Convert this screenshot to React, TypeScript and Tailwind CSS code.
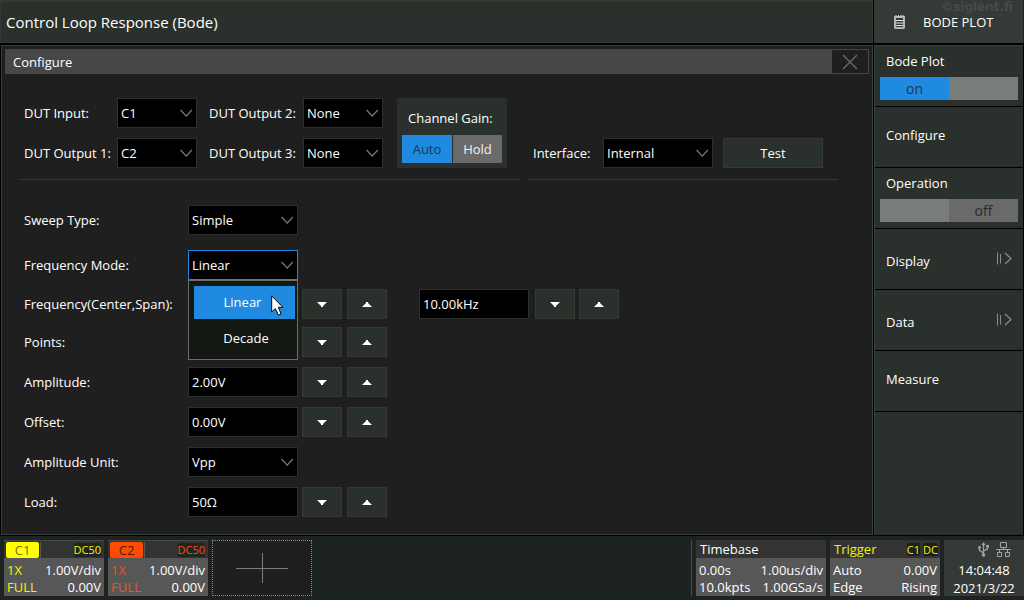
import type { ReactNode } from "react";

const fieldBase =
  "h-[30px] w-full appearance-none rounded-none border bg-black pl-[3px] text-[13px] text-white outline-none";
const field = `${fieldBase} border-[#2b312c]`;
const activeField = `${fieldBase} border-[#1f8ae0]`;

function Chevron() {
  return (
    <svg viewBox="0 0 13 9" className="pointer-events-none absolute top-[11px] right-1 h-[9px] w-[13px]" fill="none" stroke="#7d7d7d" strokeWidth="1.2">
      <path d="M0.6 1 L6.2 7.2 L11.8 1" />
    </svg>
  );
}

function Select({ id, value, options, active = false }: { id: string; value: string; options: string[]; active?: boolean }) {
  return (
    <div className="relative">
      <select id={id} defaultValue={value} className={active ? activeField : field}>
        {options.map((o) => (
          <option key={o}>{o}</option>
        ))}
      </select>
      <Chevron />
    </div>
  );
}

function Step({ dir, label }: { dir: "up" | "down"; label: string }) {
  return (
    <button type="button" aria-label={label} className="flex h-[30px] w-10 items-center justify-center border border-[#353a35] bg-[#2a302b]">
      <svg viewBox="0 0 10 6" className="h-[6px] w-[10px]" fill="#fff">
        <path d={dir === "down" ? "M0 1 H10 L6 5 V6 H4 V5 Z" : "M0 6 H10 L6 2 V1 H4 V2 Z"} />
      </svg>
    </button>
  );
}

function Steps({ name }: { name: string }) {
  return (
    <>
      <Step dir="down" label={`Decrease ${name}`} />
      <Step dir="up" label={`Increase ${name}`} />
    </>
  );
}

function Row({ id, label, children }: { id: string; label: string; children: ReactNode }) {
  return (
    <div className="flex h-[30px] items-center">
      <label htmlFor={id} className="w-[164px] shrink-0">
        {label}
      </label>
      {children}
    </div>
  );
}

function NumberRow({ id, label, value }: { id: string; label: string; value: string }) {
  return (
    <Row id={id} label={label}>
      <div className="mr-1 w-[110px]">
        <input id={id} defaultValue={value} className={field} />
      </div>
      <div className="flex gap-[5px]">
        <Steps name={label} />
      </div>
    </Row>
  );
}

function FrequencyMenu() {
  return (
    <ul role="listbox" aria-label="Frequency Mode" className="absolute top-[30px] left-0 z-10 h-20 w-full border border-[#6a6e6a] bg-[#131813] px-[5px] pt-[5px] pr-[2px] text-center">
      <li role="option" aria-selected="true" className="h-[33px] bg-[#1f8ae0] pr-1 leading-[33px]">
        Linear
      </li>
      <li role="option" aria-selected="false" className="h-[39px] pl-[3px] leading-[39px]">
        Decade
      </li>
    </ul>
  );
}

function Cursor() {
  return (
    <svg viewBox="0 0 13 21" className="pointer-events-none absolute top-[45px] left-[83px] z-20 h-[21px] w-[13px]" fill="#fff" stroke="#000" strokeWidth="1">
      <path d="M0.7 1 V17 L4.3 13.6 L7.4 20.2 L10.2 19 L7.3 12.3 H12 Z" />
    </svg>
  );
}

function Configure() {
  return (
    <main className="border border-[#3a3e3a] bg-[#1f1f1f] p-[3px] pb-[17px]">
      <div className="flex h-[25px] bg-[#474747]">
        <h2 className="flex-1 pl-2 leading-[26px]">Configure</h2>
        <button type="button" aria-label="Close" className="flex w-[37px] items-center justify-center border border-l-0 border-[#474747] bg-[#1f1f1f]">
          <svg viewBox="0 0 16 16" className="h-4 w-4" fill="none" stroke="#616161" strokeWidth="1.7">
            <path d="M1 1 L15 15 M15 1 L1 15" />
          </svg>
        </button>
      </div>

      <div className="mt-6 ml-[14px] flex gap-[9px]">
        <section className="flex w-[500px] gap-[14px] border-b border-[#383838] pb-[11px] pl-[5px]">
          <div className="grid grid-cols-[93px_80px_12px_94px_80px] grid-rows-[30px_30px] items-center gap-y-[10px]">
            <label htmlFor="dut-in">DUT Input:</label>
            <Select id="dut-in" value="C1" options={["C1", "C2"]} />
            <label htmlFor="dut-out2" className="col-start-4">DUT Output 2:</label>
            <Select id="dut-out2" value="None" options={["None"]} />
            <label htmlFor="dut-out1">DUT Output 1:</label>
            <Select id="dut-out1" value="C2" options={["C1", "C2"]} />
            <label htmlFor="dut-out3" className="col-start-4">DUT Output 3:</label>
            <Select id="dut-out3" value="None" options={["None"]} />
          </div>
          <div role="group" aria-label="Channel Gain" className="w-[110px] bg-[#2a302b] p-[5px] pt-0">
            <p className="h-[37px] pl-[6px] leading-[41px]">Channel Gain:</p>
            <div className="grid h-7 grid-cols-[50px_1fr] gap-px">
              <button type="button" aria-pressed="true" className="bg-[#1f8ae0] text-[#17395a]">Auto</button>
              <button type="button" aria-pressed="false" className="bg-[#6a6a6a] text-[#f2f2f2]">Hold</button>
            </div>
          </div>
        </section>
        <section className="flex w-[310px] items-end border-b border-[#383838] pb-[11px] pl-[5px]">
          <label htmlFor="iface" className="w-[70px] leading-[30px]">Interface:</label>
          <div className="mr-[10px] w-[110px]">
            <Select id="iface" value="Internal" options={["Internal", "External"]} />
          </div>
          <button type="button" className="h-[30px] w-[100px] border border-[#353a35] bg-[#2a302b]">Test</button>
        </section>
      </div>

      <div className="mt-[25px] ml-[19px] flex flex-col gap-[10px]">
        <Row id="sweep" label="Sweep Type:">
          <div className="w-[110px]">
            <Select id="sweep" value="Simple" options={["Simple", "Vari-Level"]} />
          </div>
        </Row>
        <div className="flex flex-col gap-2 pt-[5px]">
          <Row id="mode" label="Frequency Mode:">
            <div className="relative w-[110px]">
              <Select id="mode" value="Linear" options={["Linear", "Decade"]} active />
              <FrequencyMenu />
              <Cursor />
            </div>
          </Row>
          <div className="flex gap-8 pt-px">
            <NumberRow id="center" label="Frequency(Center,Span):" value="" />
            <div className="flex gap-1">
              <div className="mr-[2px] w-[110px]">
                <input aria-label="Span" defaultValue="10.00kHz" className={field} />
              </div>
              <Steps name="Span" />
            </div>
          </div>
          <NumberRow id="points" label="Points:" value="" />
        </div>
        <NumberRow id="amplitude" label="Amplitude:" value="2.00V" />
        <NumberRow id="offset" label="Offset:" value="0.00V" />
        <Row id="unit" label="Amplitude Unit:">
          <div className="w-[110px]">
            <Select id="unit" value="Vpp" options={["Vpp", "Vrms", "dBV"]} />
          </div>
        </Row>
        <NumberRow id="load" label="Load:" value="50Ω" />
      </div>
    </main>
  );
}

function ToggleItem({ label, on }: { label: string; on: boolean }) {
  return (
    <button type="button" role="switch" aria-checked={on} aria-label={label} className="flex h-[61px] w-full flex-col border-b border-black px-[5px] text-left">
      <span className="h-[31px] pl-[6px] leading-[31px]">{label}</span>
      <span className="grid h-[23px] w-full grid-cols-2 bg-[#797d79] text-center text-[14px] leading-[23px]">
        {on ? (
          <span className="bg-[#1f8ae0] text-[#17395a]">on</span>
        ) : (
          <span className="col-start-2 bg-[#6a6a6a] text-[#252b26]">off</span>
        )}
      </span>
    </button>
  );
}

function MenuItem({ label, sub = false }: { label: string; sub?: boolean }) {
  return (
    <button
      type="button"
      className={
        sub
          ? "flex h-[61px] w-full justify-between border-b border-black pt-[23px] pr-[11px] pl-[11px] text-left"
          : "flex h-[61px] w-full border-b border-black pt-[19px] pl-[11px] text-left"
      }
    >
      {label}
      {sub && (
        <svg viewBox="0 0 15 13" className="h-[13px] w-[15px]" fill="none" stroke="#8b8f8b">
          <path d="M0.5 0.5 V12.5 M3.5 2 V11.5" />
          <path d="M8 1 L14 6.5 L8 12" strokeWidth="1.2" />
        </svg>
      )}
    </button>
  );
}

function Channel({ name, chip, text }: { name: string; chip: string; text: string }) {
  return (
    <section className="w-[100px] bg-[#575757]">
      <div className="flex h-[18px] border-t border-[#474b47] bg-[#333]">
        <button type="button" className={`mt-px ml-[2px] h-4 w-[33px] rounded-[2px] leading-4 ${chip}`}>{name}</button>
        <span className="mt-px ml-px w-px bg-[#575757]" />
        <span className={`mt-[2px] mr-[3px] ml-auto h-[14px] rounded-[2px] bg-[#1f261f] text-[11px] leading-[14px] font-medium ${text}`}>DC50</span>
      </div>
      <div className="grid grid-cols-[auto_auto] justify-between px-[3px] pt-[4px] leading-[17px]">
        <span className={text}>1X</span>
        <span className="text-right">1.00V/div</span>
        <span className={text}>FULL</span>
        <span className="text-right">0.00V</span>
      </div>
    </section>
  );
}

function InfoCard({ head, rows, className }: { head: ReactNode; rows: string[][]; className: string }) {
  return (
    <section className={`bg-[#575757] ${className}`}>
      <div className="flex h-[18px] items-center bg-[#333] pr-[2px] pl-1">{head}</div>
      <div className="pt-1 pr-[3px] pl-[3px] leading-[17px]">
        {rows.map(([a, b]) => (
          <div key={a} className="flex justify-between">
            <span>{a}</span>
            <span>{b}</span>
          </div>
        ))}
      </div>
    </section>
  );
}

function StatusBar() {
  return (
    <footer className="flex h-16 gap-1 bg-[#1d241f] pt-1 pb-1 pl-1">
      <Channel name="C1" chip="bg-[#ffff00] text-[#7d6a14]" text="text-[#f4f400]" />
      <Channel name="C2" chip="bg-[#ff4b00] text-[#4a1c0a]" text="text-[#ff4b1e]" />
      <button type="button" aria-label="Add channel" className="flex w-[100px] items-center justify-center border border-dotted border-[#8a8a8a] bg-[#1f1f1f]">
        <svg viewBox="0 0 52 30" className="h-[30px] w-[52px]" stroke="#7d7d7d">
          <path d="M0 15.5 H52 M26.5 0 V30" />
        </svg>
      </button>
      <div className="ml-auto w-px bg-[#474b47]" />
      <InfoCard
        className="w-[130px]"
        head="Timebase"
        rows={[["0.00s", "1.00us/div"], ["10.0kpts", "1.00GSa/s"]]}
      />
      <InfoCard
        className="w-[110px]"
        head={
          <>
            <span className="text-[#f4f400]">Trigger</span>
            <span className="mr-[3px] ml-auto rounded-[2px] bg-[#1f1f1f] text-[11px] leading-[13px] font-medium text-[#f4f400]">C1</span>
            <span className="rounded-[2px] bg-[#1f1f1f] text-[11px] leading-[13px] font-medium text-[#f4f400]">DC</span>
          </>
        }
        rows={[["Auto", "0.00V"], ["Edge", "Rising"]]}
      />
      <section className="w-20 bg-[#363a36] text-center leading-[18px]">
        <div className="flex h-[21px] items-start justify-end gap-[7px] pt-[2px] pr-[13px]">
          <svg viewBox="0 0 11 15" className="h-[15px] w-[11px]" fill="none" stroke="#a3a3a3" strokeWidth="1.3">
            <path d="M5.5 2 V13 M5.5 11 L1.5 8.5 V5.5 M5.5 9 L9.5 7 V4" />
            <path d="M5.5 0 L7.5 3 H3.5 Z" fill="#a3a3a3" stroke="none" />
            <circle cx="5.5" cy="13" r="1.8" fill="#a3a3a3" stroke="none" />
            <circle cx="1.5" cy="5.5" r="1.4" fill="#a3a3a3" stroke="none" />
            <path d="M8.2 3 H11 V5.5 H8.2 Z" fill="#a3a3a3" stroke="none" />
          </svg>
          <svg viewBox="0 0 15 15" className="h-[15px] w-[15px]" fill="none" stroke="#a3a3a3">
            <path d="M4.5 0.5 H10.5 V5.5 H4.5 Z M1.5 10.5 H5.5 V14.5 H1.5 Z M9.5 10.5 H13.5 V14.5 H9.5 Z M7.5 5.5 V7.5 M0 7.5 H15 M3.5 7.5 V10.5 M11.5 7.5 V10.5" />
          </svg>
        </div>
        <time className="block">14:04:48</time>
        <time className="block">2021/3/22</time>
      </section>
    </footer>
  );
}

export default function App() {
  return (
    <div className="flex min-h-screen flex-col bg-black font-['Open_Sans',sans-serif] text-[13px] leading-[18px] text-white">
      <div className="grid flex-1 grid-cols-[1fr_150px] grid-rows-[44px_1fr] gap-x-px">
        <header className="mb-px border border-t-2 border-[#343934] bg-[#2a302b] pl-[5px]">
          <h1 className="text-[15px] leading-[40px]">Control Loop Response (Bode)</h1>
        </header>
        <div className="relative mb-px flex items-center border-r border-[#1d241f] bg-[#363a36] pl-5">
          <svg viewBox="0 0 11 14" className="h-[14px] w-[11px]">
            <path d="M0 1 H11 V13 L10 14 H1 L0 13 Z" fill="#b5b5b5" />
            <path d="M2 0 V2 M4.5 0 V2 M7 0 V2 M9 0 V2" stroke="#d5d5d5" />
            <path d="M2 3 H9 V12 H2 Z" fill="#363a36" />
            <path d="M2 5.5 H9 M2 8 H9 M2 10.5 H9" stroke="#e5e5e5" />
          </svg>
          <span className="ml-[18px]">BODE PLOT</span>
          <span className="absolute -top-px right-[10px] font-['DejaVu_Sans',sans-serif] text-[12px] leading-4 font-bold text-[#474a48]">©siglent.fi</span>
        </div>
        <div className="mb-px flex flex-col pt-px pl-px *:flex-1">
          <Configure />
        </div>
        <nav aria-label="Bode plot menu" className="mt-px mr-px mb-px border-t border-l border-[#3a3e3a] bg-[#2a302b]">
          <ToggleItem label="Bode Plot" on />
          <MenuItem label="Configure" />
          <ToggleItem label="Operation" on={false} />
          <MenuItem label="Display" sub />
          <MenuItem label="Data" sub />
          <MenuItem label="Measure" />
        </nav>
      </div>
      <StatusBar />
    </div>
  );
}
